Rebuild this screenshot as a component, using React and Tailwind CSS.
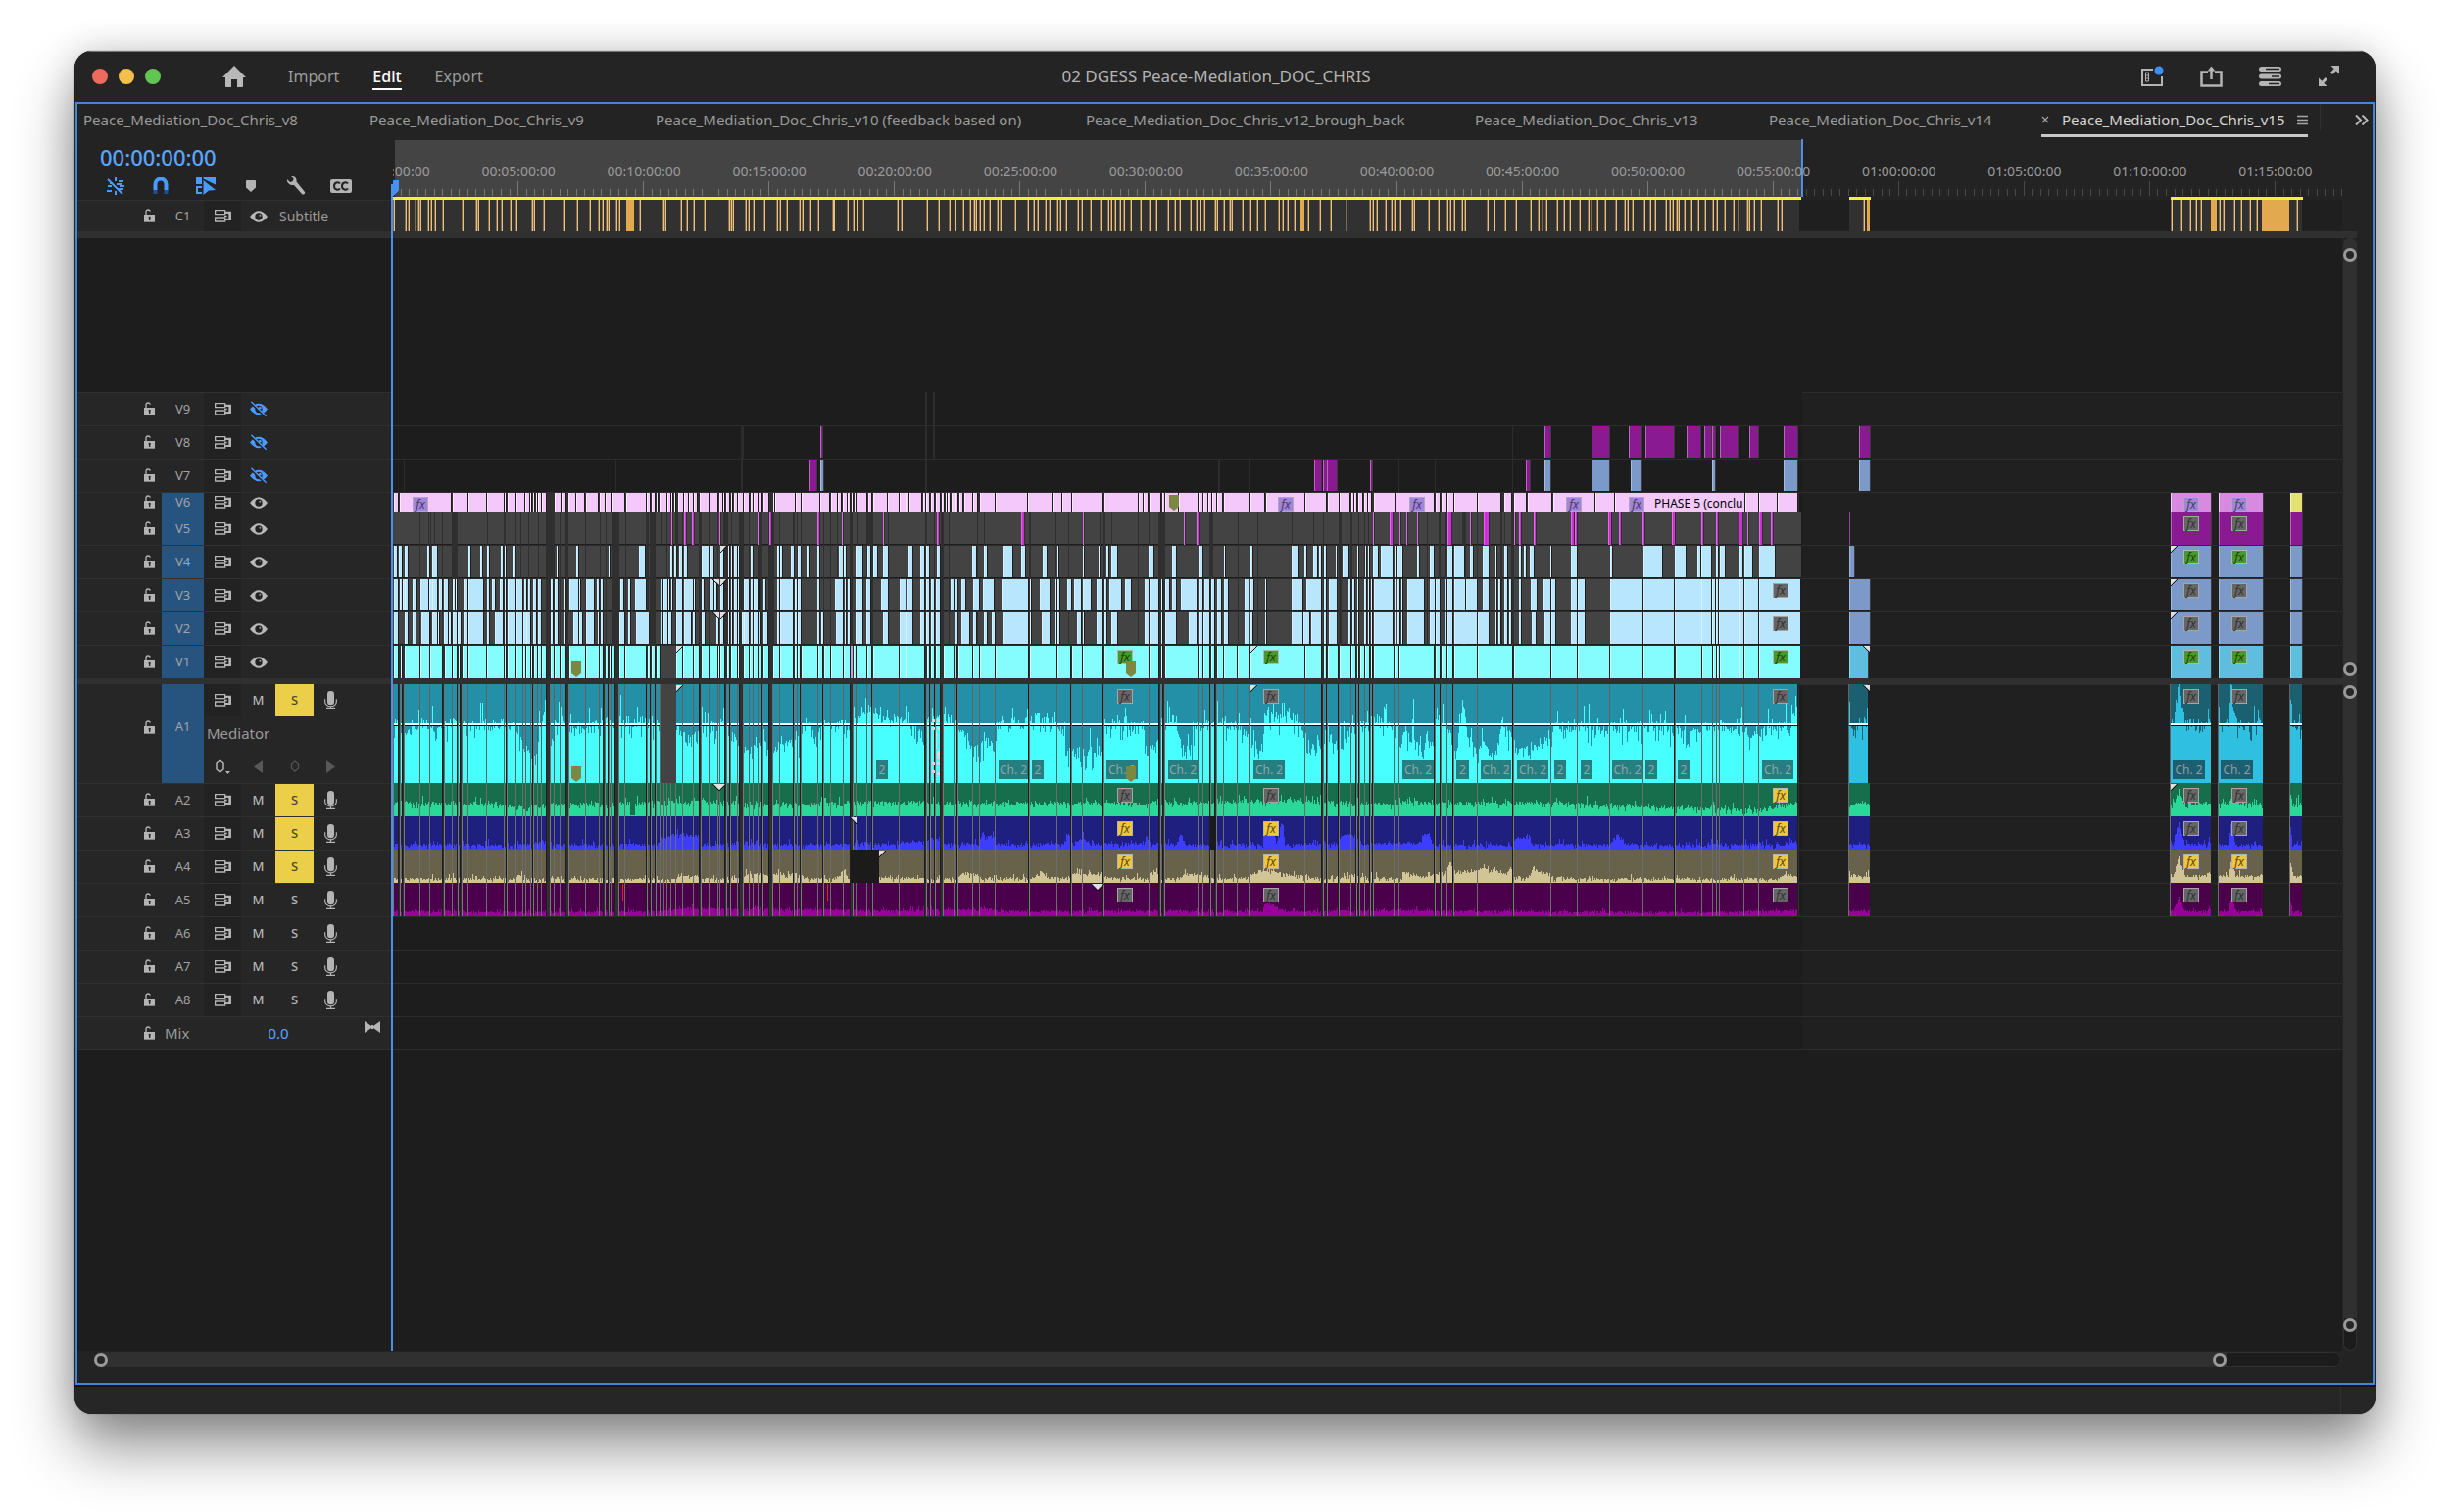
import React from "react";

/* ---------- timeline geometry ---------- */

const LANE_W = 1989;
const pct = (x) => `${((x - 1) / LANE_W) * 100}%`;

/* Clip edges are kept per reel, in thirds of a timeline step, counted from the reel's start. */
const REEL_START = [-30, 1530, 3090];

const parse = (reels) =>
  reels.flatMap((text, i) =>
    text
      .trim()
      .split(/\s+/)
      .filter(Boolean)
      .map((pair) => {
        const [a, b] = pair.split("-").map(Number);
        const x0 = Math.round((a + REEL_START[i]) / 3);
        const x1 = Math.max(x0 + 1, Math.round(((b ?? a + 3) + REEL_START[i]) / 3));
        return [x0, x1];
      })
  );

const CUTS = parse([
  "36-49 57-61 69-115 117-144 147-184 192-212 216-227 233-237 245-261 264-319 322-371 374-378 384-408 411-429 433-437 442-452 456-460 464-474 478-486 489-501 516-524 529-543 546-560 574-620 624-664 667-674 683-690 695-700 703-711 726-741 745-808 813-820 825-835 839-850 853-860 863-870 874-882 886-897 900-918 922-952 955-970 978-1000 1003-1026 1029-1033 1036-1048 1056-1063 1068-1086 1089-1093 1108-1121 1126-1133 1137-1148 1152-1160 1167-1182 1198-1215 1218-1256 1263-1268 1271-1279 1283-1331 1335-1348 1352-1370 1373-1411 1414-1431 1444-1450 1453-1482 1486-1496 1504-1582",
  "25-42 46-99 107-115 119-128 135-148 160-189 193-198 204-246 249-268 271-316 319-418 422-503 507-547 551-582 586-646 650-785 789-817 825-828 836-936 940-951 955-972 977-987 996-1013 1017-1055 1060-1094 1097-1262 1266-1315 1323-1330 1335-1366 1370-1404 1408-1419 1424-1429 1433-1446 1450-1462 1466-1471 1475-1536 1540-1550 1553-1660",
  "105-117 124-137 140-156 162-231 235-338 345-456 460-537 541-636 640-738 742-835 839-917 921-950 954-962 966-971 975-1031 1035-1047 1051-1092 1096-1212",
]);

const V6 = parse([
  "36-49 54-211 215-261 264-319 322-371 374-378 384-408 411-435 438-449 453-457 461-466 470-474 478-486 489-501 529-545 548-562 570-592 595-619 624-661 667-680 683-698 705-742 746-808 811-820 824-835 839-843 848-870 873-881 884-889 893-897 907-920 925-935 938-952 955-964 973-1000 1003-1026 1033-1040 1045-1048 1052-1063 1068-1072 1078-1085 1089-1103 1108-1122 1127-1133 1137-1148 1152-1160 1167-1182 1197-1200 1203-1262 1266-1280 1283-1338 1341-1369 1373-1391 1395-1404 1409-1421 1424-1431 1436-1440 1446-1449 1453-1483 1487-1496 1504-1545 1548-1582",
  "25-42 46-50 53-90 95-101 105-115 119-128 135-148 152-160 164-168 172-178 182-192 196-202 206-215 221-246 249-261 269-316 319-414 418-490 495-520 523-548 552-646 650-752 757-768 772-784 788-822 827-833 837-875 880-935 940-950 955-965 970-977 981-993 996-1012 1017-1095 1098-1140 1145-1262 1266-1330 1335-1368 1372-1402 1408-1412 1416-1422 1428-1440 1445-1455 1459-1468 1475-1538 1542-1660",
  "105-117 124-137 140-158 162-231 235-303 315-336 345-381 386-460 465-591 594-652 655-1051 1054-1092 1096-1148 1152-1212",
]);

const V5_GAPS = parse([
  "115-118 140-143 147-150 158-161 184-187 212-231 321-325 373-377 408-411 422-425 448-451 478-481 501-527 543-546 560-570 622-625 667-670 685-688 705-726 745-748 808-815 820-836 869-872 897-905 918-921 970-978 1000-1003 1026-1029 1045-1060 1068-1071 1093-1108 1123-1126 1148-1165 1182-1200 1215-1218 1256-1262 1268-1272 1281-1284 1350-1353 1370-1373 1391-1394 1431-1440 1483-1502 1548-1551",
  "101-107 130-133 150-160 174-177 260-263 283-286 341-344 420-425 500-503 541-544 635-638 648-654 673-676 753-756 785-788 817-836 941-944 973-985 1059-1063 1120-1123 1225-1228 1290-1293 1320-1323 1368-1376 1404-1409 1428-1432 1445-1448 1458-1462",
  "78-81 115-120 135-140 186-198 232-235 303-310 315-318 337-345",
]);

const V5_CLIPS = parse([
  "852-855 885-888 923-929 949-954 1032-1035 1149-1153 1185-1191 1332-1337 1407-1410 1452-1455 1533-1536",
  "138-143 396-405 585-588 893-897 934-938 1472-1475 1524-1533 1554-1557",
  "14-17 48-51 141-153 210-214 251-267 345-348 360-365 405-410 519-528 531-537 634-642 666-671 739-743 829-837 918-923 963-968 1032-1045 1058-1061 1095-1103 1131-1136",
]);

const V4 = parse([
  "36-45 52-60 69-78 138-144 154-168 263-270 301-306 321-326 362-370 374-378 399-408 533-538 594-600 692-697 786-803 883-888 893-900 908-918 924-932 978-1000 1005-1015 1034-1045 1058-1063 1067-1072 1078-1085 1088-1093 1128-1133 1209-1215 1218-1223 1251-1259 1271-1280 1299-1307 1332-1337 1397-1411 1414-1418 1450-1471 1486-1495 1503-1515 1533-1548",
  "50-63 86-99 106-115 137-148 246-258 282-291 339-368 396-408 461-474 506-510 584-587 633-637 656-662 673-690 787-800 857-869 938-951 1016-1020 1098-1103 1224-1245 1263-1269 1289-1302 1307-1314 1322-1330 1358-1363 1379-1398 1424-1428 1448-1452 1458-1462 1473-1488 1496-1534 1540-1544 1549-1560",
  "0-3 47-54 87-99 140-157 163-193 210-218 249-267 288-292 315-324 360-366 376-381 393-405 455-460 519-537 638-646 740-797 837-870 906-915 918-948 963-970 974-989 1034-1044 1050-1074 1095-1143",
]);

const V3 = parse([
  "36-49 53-60 64-68 69-78 93-105 117-141 145-152 154-168 175-183 189-200 216-221 225-229 248-261 263-309 321-326 337-345 360-370 374-378 384-408 411-429 434-440 446-452 463-470 478-486 516-522 529-537 558-562 574-600 604-607 624-648 657-664 668-676 729-738 752-758 774-806 852-857 860-872 876-880 885-888 900-918 924-950 955-957 978-985 1002-1014 1018-1024 1034-1045 1058-1063 1068-1072 1078-1085 1089-1093 1108-1121 1127-1133 1137-1148 1152-1156 1167-1174 1209-1214 1218-1256 1263-1268 1272-1280 1332-1337 1386-1411 1415-1418 1424-1430 1450-1471 1483-1495 1528-1548",
  "25-42 49-63 86-99 106-114 120-128 136-148 179-189 193-200 212-226 249-267 278-312 335-418 422-426 452-482 500-503 506-512 538-548 558-580 585-609 628-646 650-656 666-702 713-732 774-785 789-817 825-828 836-850 857-870 885-934 938-951 956-972 977-987 996-1008 1016-1029 1080-1093 1098-1107 1143-1147 1224-1257 1269-1315 1323-1329 1337-1362 1398-1404 1411-1416 1424-1429 1446-1452 1458-1462 1467-1470 1475-1533 1539-1543 1549-1553",
  "0-3 18-68 87-101 105-117 132-137 140-156 163-195 198-231 249-267 288-292 296-303 315-324 329-336 360-366 396-414 434-455 458-471 519-537 540-561 638-738 740-835 837-917 919-948 952-960 964-970 973-1031 1035-1046 1050-1091 1095-1221",
]);

const V2 = parse([
  "36-49 69-78 93-103 121-144 153-168 172-175 188-200 204-210 216-227 232-240 248-261 263-309 322-326 345-368 374-378 384-408 411-429 432-440 442-453 463-470 478-486 516-522 529-537 558-562 585-600 603-612 624-648 660-664 668-676 726-741 752-758 777-816 852-857 861-872 876-884 900-918 924-945 950-958 978-988 1023-1030 1034-1045 1058-1063 1068-1072 1078-1085 1089-1093 1102-1106 1108-1121 1127-1133 1137-1148 1152-1158 1167-1178 1209-1214 1218-1256 1263-1268 1272-1280 1332-1337 1344-1350 1389-1411 1415-1418 1424-1430 1450-1471 1483-1495 1533-1548",
  "25-42 46-63 86-99 106-114 120-128 136-148 192-201 212-238 249-258 282-291 306-315 339-418 422-427 459-482 500-503 506-512 567-580 584-588 628-646 650-656 673-690 774-785 789-817 825-828 836-870 909-934 938-951 955-972 977-987 996-1008 1016-1029 1080-1093 1098-1105 1143-1147 1224-1258 1260-1278 1284-1315 1323-1329 1337-1362 1398-1404 1411-1416 1424-1429 1446-1452 1458-1462 1467-1470 1475-1533 1539-1543 1549-1553",
  "0-3 18-68 87-101 105-117 132-137 140-156 162-231 235-267 288-292 296-303 315-324 329-336 360-366 398-411 438-455 458-471 519-537 540-561 638-738 740-835 837-917 919-948 952-960 964-970 973-1031 1035-1046 1050-1091 1095-1221",
]);

const V7_PURPLE = parse(["1308-1330", "1293-1314 1320-1331 1333-1362 1464-1469", "381-394"]);
const V7_BLUE = parse(["1341-1349", "", "438-455 581-635 702-736 951-960 1171-1213"]);
const V8_PURPLE = parse(["1341-1348", "", "438-455 581-635 695-736 747-834 873-916 927-948 951-959 975-1030 1065-1091 1171-1213"]);
const V9_LINES = parse(["", "103-107 127-131", ""]);
const V8_LINES = parse(["1097-1107", "103-107 127-131", "338-342"]);
const V7_LINES = parse(["66-69 714-717 1098-1104", "103-107 1000-1004 1094-1098 1552-1555", "101-104 338-342"]);

const SUBTITLES = [
  ...[672, 694, 701, 715, 721, 725, 739, 746, 754, 769, 808, 836, 840, 861, 877, 887, 904, 916, 948, 952, 972, 1013, 1037, 1064, 1080, 1088, 1096, 1101, 1117, 1122, 1164, 1210, 1215, 1245, 1258, 1272, 1293, 1341, 1346, 1350, 1375, 1380, 1391, 1413, 1437, 1443, 1457, 1482, 1489, 1504, 1519, 1550].map((v) => Math.round(v / 1.96 - 340.5)),
  ...[33, 75, 95, 107, 123, 229, 241, 319, 356, 388, 405, 430, 450, 462, 470, 482, 494, 510, 535, 543, 588, 629, 645, 657, 682, 694, 719, 727, 744, 780, 792, 821, 849, 873, 882, 894, 910, 922, 942, 972, 1000, 1020, 1057, 1077, 1093, 1126, 1143, 1155, 1167, 1200, 1208, 1228, 1245, 1252, 1285, 1310, 1329, 1355, 1395, 1407, 1423, 1444, 1485, 1521].map((v) => Math.round(v / 3 + 439.5)),
  ...[24, 73, 146, 153, 167, 192, 212, 220, 237, 273, 281, 326, 354, 383, 391, 404, 428, 436, 505, 525, 558, 591, 636, 660, 672, 684, 717, 738, 758, 786, 815, 824, 840, 864, 897, 925, 933, 950, 986, 1002, 1019, 1051, 1063, 1071, 1083, 1091, 1108, 1129, 1149, 1170, 1194, 1206, 1231, 1259, 1272, 1300, 1307, 1320, 1341, 1393, 1406].map((v) => Math.round(v / 3 + 949.5)),
  1502, 1816, 1826, 1835, 1841, 1846, 1865, 1869, 1880, 1887, 1896, 1903, 1944,
].map((x) => [x, x + 1]);
const SUBTITLE_BLOCKS = [[239, 247], [927, 931], [1505, 1508], [1856, 1862], [1908, 1936]];

const TAIL = [[1487, 1508], [1815, 1856], [1864, 1909], [1937, 1949]];
const TAIL_V1 = [[1487, 1506], ...TAIL.slice(1)];

/* ---------- drawing helpers ---------- */

const rects = (list, y, h) => list.map(([a, b]) => `M${a} ${y}H${b}V${y + h}H${a}Z`).join("");
const rand = (x, seed) => {
  const s = Math.sin(x * 12.9898 + seed * 78.233) * 43758.5453;
  return s - Math.floor(s);
};

/* Loudness curves: one list of [position, height] per reel. */
const curve = (reels) => reels.flatMap((pts, i) => pts.map(([v, h]) => [(v + REEL_START[i]) / 3, h]));
const at = (pts, x) => {
  for (let i = 1; i < pts.length; i++) {
    if (x <= pts[i][0]) {
      const [x0, h0] = pts[i - 1];
      const [x1, h1] = pts[i];
      return h0 + ((h1 - h0) * Math.max(0, x - x0)) / Math.max(0.1, x1 - x0);
    }
  }
  return pts[pts.length - 1][1];
};

const A1_CURVE = curve([
  [[36, 60], [80, 54], [125, 64], [150, 58], [300, 60], [405, 56], [412, 48], [440, 30], [470, 24], [478, 40], [490, 72], [501, 66], [516, 40], [530, 60], [550, 66], [574, 57], [640, 57], [700, 62], [760, 62], [835, 62], [900, 58], [915, 48], [945, 42], [968, 50], [980, 56], [1048, 60], [1060, 50], [1110, 36], [1180, 38], [1200, 36], [1278, 42], [1284, 54], [1310, 58], [1330, 40], [1336, 58], [1370, 60], [1430, 60], [1450, 68], [1490, 78], [1504, 76], [1530, 66], [1558, 62]],
  [[0, 64], [40, 64], [50, 62], [99, 46], [107, 70], [148, 72], [160, 66], [205, 60], [245, 36], [316, 44], [319, 60], [400, 62], [425, 64], [500, 68], [515, 56], [545, 30], [646, 32], [650, 60], [690, 60], [768, 58], [772, 30], [817, 38], [836, 60], [870, 64], [882, 34], [920, 32], [925, 60], [1055, 60], [1094, 50], [1100, 42], [1134, 36], [1138, 72], [1160, 70], [1170, 64], [1215, 70], [1260, 58], [1268, 34], [1340, 46], [1350, 36], [1404, 52], [1450, 60], [1480, 64], [1540, 56]],
  [[0, 52], [30, 44], [35, 70], [40, 42], [98, 40], [106, 66], [130, 62], [140, 56], [156, 42], [170, 34], [188, 84], [205, 42], [233, 36], [240, 44], [270, 30], [292, 34], [308, 66], [335, 44], [345, 38], [370, 30], [400, 38], [456, 44], [460, 58], [560, 58], [600, 54], [640, 56], [740, 58], [835, 54], [880, 48], [920, 58], [1000, 58], [1040, 50], [1092, 54], [1150, 56], [1190, 60], [1210, 76]],
]);
const A2_CURVE = curve([[[36, 13], [300, 13], [430, 9], [530, 12], [1000, 15], [1200, 12], [1560, 15]], [[0, 14], [800, 13], [1200, 16], [1560, 12]], [[0, 15], [100, 13], [400, 14], [640, 11], [850, 8], [1100, 7], [1212, 14]]]);
const A3_CURVE = curve([
  [[36, 5], [470, 5], [474, 9], [500, 9], [510, 5], [840, 5], [855, 12], [900, 16], [968, 14], [975, 5], [1040, 5], [1110, 7], [1180, 5], [1430, 5], [1460, 7]],
  [[0, 5], [100, 9], [150, 12], [160, 6], [265, 5], [272, 14], [312, 14], [318, 5], [525, 6], [540, 16], [550, 6], [586, 12], [600, 5], [770, 6], [782, 14], [790, 6], [870, 5], [885, 16], [896, 5], [1134, 5], [1138, 24], [1165, 28], [1176, 6], [1196, 28], [1202, 5], [1366, 6], [1374, 14], [1420, 16], [1428, 6]],
  [[0, 6], [58, 7], [62, 16], [85, 16], [92, 5], [343, 4], [346, 11], [392, 14], [397, 5], [640, 5], [650, 14], [674, 14], [682, 6], [750, 4], [1170, 5], [1212, 9]],
]);
const A4_CURVE = curve([
  [[36, 4], [408, 4], [412, 8], [440, 6], [445, 4], [895, 4], [905, 8], [968, 7], [974, 4], [1100, 5], [1120, 9], [1280, 9], [1290, 5], [1385, 4], [1415, 13], [1424, 4]],
  [[0, 5], [200, 4], [215, 9], [265, 8], [275, 4], [440, 5], [460, 10], [474, 5], [545, 6], [555, 9], [646, 8], [655, 5], [786, 4], [790, 12], [817, 10], [825, 4], [885, 5], [890, 9], [970, 7], [990, 4], [1094, 5], [1100, 9], [1150, 14], [1200, 9], [1262, 6], [1330, 4], [1400, 7], [1560, 4]],
  [[0, 11], [40, 9], [70, 5], [100, 9], [120, 6], [140, 14], [150, 20], [165, 10], [260, 15], [320, 9], [335, 16], [345, 5], [390, 6], [400, 13], [456, 9], [465, 5], [560, 4], [1150, 4], [1180, 9], [1212, 6]],
]);
const A5_CURVE = curve([[[36, 5], [440, 4], [850, 5], [930, 8], [1560, 6]], [[0, 6], [300, 7], [320, 5], [1134, 5], [1139, 13], [1170, 12], [1180, 9], [1200, 5], [1560, 6]], [[0, 6], [640, 4], [1000, 4], [1212, 6]]]);

/* Clips after the out point have their own loudness peaks. */
const tailLevel = (x, base, peak) => {
  const near = (c, w) => Math.max(0, 1 - Math.abs(x - c) / w);
  return base + (peak - base) * Math.max(near(1823, 6), near(1877, 4), near(1937, 2) * 0.8, near(1854, 2) * 0.3);
};

function wave(clips, height, level, jitter, seed) {
  let d = "";
  for (const [a, b] of clips) {
    for (let x = a; x < b; x++) {
      const r = rand(x, seed);
      const spike = rand(x, seed + 5) > 0.86 ? rand(x, seed + 9) * jitter * 1.8 : 0;
      const dip = rand(x, seed + 7) > 0.84 ? jitter * 0.9 : 0;
      const h = Math.max(1, Math.min(height, Math.round(level(x) + (r - 0.5) * jitter + spike - dip)));
      d += `M${x} ${height - h}h1v${h}h-1z`;
    }
  }
  return d;
}

function Lane({ h, children }) {
  return (
    <svg className="block h-full w-full" viewBox={`1 0 ${LANE_W} ${h}`} preserveAspectRatio="none" shapeRendering="crispEdges" aria-hidden="true">
      {children}
    </svg>
  );
}

function Clips({ list, y, h, fill, edge = "#ffffff", edgeOpacity = 0.6, gap = "#1e1e1e" }) {
  return (
    <>
      <path d={rects(list.map(([, b]) => [b, b + 1]), y, h)} fill={gap} />
      <path d={rects(list, y, h)} fill={fill} />
      <path d={rects(list.map(([a]) => [a, a + 1]), y, h)} fill={edge} fillOpacity={edgeOpacity} />
    </>
  );
}

const Corner = ({ x, flip }) => (
  <g shapeRendering="auto">
    <path d={flip ? `M${x} 1h-6l6 6z` : `M${x} 1h6l-6 6z`} fill="#e0e0e0" />
    <path d={flip ? `M${x - 7} 1l7 7` : `M${x + 7} 1l-7 7`} stroke="#111" strokeWidth="1" />
  </g>
);

const BADGE = {
  gray: "border-[#a6a6a6] bg-[#666666] text-[#333333]",
  green: "border-[#b4b4b4] bg-[#469a2c] text-[#20400f]",
  yellow: "border-[#b4b4b4] bg-[#f0c63c] text-[#5b4a10]",
  violet: "border-[#b3a6c4] bg-[#a284dc] text-[#463a6a]",
};

function Fx({ x, tone }) {
  return (
    <span className={`absolute top-[5px] flex h-[15px] w-4 items-center justify-center border text-[12px] leading-none italic ${BADGE[tone]}`} style={{ left: pct(x) }}>
      fx
    </span>
  );
}

function Channel({ x, w, text, dim }) {
  return (
    <span className={`absolute bottom-1 flex h-[19px] items-center justify-center text-[12px] leading-[19px] whitespace-nowrap ${dim ? "bg-[#1a6070] text-[#8f9ea2]" : "bg-[#257e7f] text-[#8fa6a6]"}`} style={{ left: pct(x), width: w }}>
      {text}
    </span>
  );
}

function Marker({ x }) {
  return (
    <svg className="absolute bottom-px h-4 w-[10px]" style={{ left: pct(x) }} viewBox="0 0 10 16" aria-hidden="true">
      <path d="M0 0h10v12l-5 4-5-4z" fill="#7c8842" />
    </svg>
  );
}

/* ---------- lanes ---------- */

const GREY = [[1, 1438]];
const PALE = { fill: "#b7e6fd", edgeOpacity: 0.45 };

function AudioLane({ h, bg, fg, tailBg, tailFg, points, tail, jitter, seed, edge = 0.35, tailClips = TAIL }) {
  return (
    <>
      <rect x="1" y="0" width="1435" height={h} fill="#303030" />
      <path d={rects(CUTS.map(([, b]) => [b, b + 1]), 0, h)} fill="#1e1e1e" />
      <path d={rects(CUTS, 0, h)} fill={bg} />
      <path d={wave(CUTS, h, (x) => at(points, x), jitter, seed)} fill={fg} />
      <path d={rects(tailClips, 0, h)} fill={tailBg ?? bg} />
      <path d={wave(tailClips, h, (x) => tailLevel(x, tail[0], tail[1]), jitter, seed)} fill={tailFg ?? fg} />
      <path d={rects([...CUTS, ...tailClips].map(([a]) => [a - 1, a]), 0, h)} fill="#ffffff" fillOpacity={edge} />
    </>
  );
}

const LANES = {
  V9: <path d={rects(V9_LINES, 0, 34)} fill="#2c2c2c" />,
  V8: (
    <>
      <path d={rects(V8_LINES, 0, 34)} fill="#2c2c2c" />
      <Clips list={[...V8_PURPLE, [1497, 1508]]} y={1} h={32} fill="#8a1a92" edgeOpacity={0.35} gap="#3a3a3a" />
    </>
  ),
  V7: (
    <>
      <path d={rects(V7_LINES, 0, 34)} fill="#2c2c2c" />
      <Clips list={V7_PURPLE} y={1} h={32} fill="#8a1a92" edgeOpacity={0.35} gap="#3a3a3a" />
      <Clips list={[...V7_BLUE, [1497, 1508]]} y={1} h={32} fill="#7b99c9" edgeOpacity={0.35} gap="#3a3a3a" />
    </>
  ),
  V6: (
    <>
      <path d={rects([[1, 1436]], 0, 20)} fill="#303030" />
      <Clips list={V6} y={1} h={19} fill="#f4c8fa" />
      <Clips list={TAIL.slice(1, 3)} y={1} h={19} fill="#d68ae0" gap="#3a3a3a" />
      <Clips list={TAIL.slice(3)} y={1} h={19} fill="#e2e272" gap="#3a3a3a" />
    </>
  ),
  V5: (
    <>
      <path d={rects(GREY, 1, 32)} fill="#434343" />
      <path d={rects(V5_GAPS, 1, 33)} fill="#2f2f2f" />
      <Clips list={V5_CLIPS} y={1} h={33} fill="#cf30dc" edge="#e070ea" edgeOpacity={0.9} gap="#2f2f2f" />
      <path d={rects([[1487, 1488]], 1, 33)} fill="#94409a" />
      <Clips list={TAIL.slice(1)} y={1} h={33} fill="#8a1a92" edgeOpacity={0.35} gap="#3a3a3a" />
    </>
  ),
  V4: (
    <>
      <path d={rects(GREY, 1, 32)} fill="#434343" />
      <path d={rects(V5_GAPS, 1, 33)} fill="#2f2f2f" />
      <Clips list={V4} y={1} h={32} {...PALE} />
      <Clips list={[[1487, 1492], ...TAIL.slice(1)]} y={1} h={32} fill="#7b99c9" edgeOpacity={0.3} gap="#3a3a3a" />
      <Corner x={335} /><Corner x={1815} />
    </>
  ),
  V3: (
    <>
      <path d={rects(GREY, 1, 32)} fill="#434343" />
      <path d={rects(V5_GAPS, 1, 33)} fill="#2f2f2f" />
      <Clips list={V3} y={1} h={32} {...PALE} />
      <Clips list={TAIL} y={1} h={32} fill="#7b99c9" edgeOpacity={0.3} gap="#3a3a3a" />
      <Corner x={335} /><Corner x={334} flip /><Corner x={1815} />
    </>
  ),
  V2: (
    <>
      <path d={rects(GREY, 1, 32)} fill="#434343" />
      <path d={rects(V5_GAPS, 1, 33)} fill="#2f2f2f" />
      <Clips list={V2} y={1} h={32} {...PALE} />
      <Clips list={TAIL} y={1} h={32} fill="#7b99c9" edgeOpacity={0.3} gap="#3a3a3a" />
      <Corner x={335} /><Corner x={334} flip /><Corner x={1815} />
    </>
  ),
  V1: (
    <>
      <path d={rects(GREY, 1, 33)} fill="#303030" />
      <Clips list={[...CUTS.slice(0, -1), [1395, 1437]]} y={1} h={33} fill="#85fdff" />
      <path d={rects([[274, 290]], 1, 33)} fill="#434343" />
      <path d={rects([[468, 470]], 1, 33)} fill="#c79fd0" />
      <Clips list={TAIL_V1} y={1} h={33} fill="#5fbddd" edgeOpacity={0.35} gap="#3a3a3a" />
      <Corner x={290} /><Corner x={876} /><Corner x={1508} flip />
    </>
  ),
  A1: (
    <>
      <AudioLane h={101} bg="#2490a8" fg="#48ffff" tailBg="#1a6070" tailFg="#2fc0e1" points={A1_CURVE} tail={[60, 98]} jitter={13} seed={3} tailClips={TAIL_V1} edge={0.3} />
      <path d={rects([...CUTS, ...TAIL_V1], 40, 2)} fill="#ffffff" />
      <path d={rects([...CUTS, ...TAIL_V1], 42, 1)} fill="#101010" />
      <path d={rects([[274, 290]], 0, 101)} fill="#434343" />
      <path d="M551 36h3v3h-3zM556 36h3v3h-3zM551 44h3v3h-3zM556 44h3v3h-3zM555 48h1v18h-1zM556 68h3v9h-3zM551 80h3v3h-3zM556 80h3v3h-3zM551 88h3v3h-3zM556 90h3v3h-3z" fill="#d8d8d8" />
      <Corner x={290} /><Corner x={876} /><Corner x={1508} flip />
    </>
  ),
  A2: (
    <>
      <AudioLane h={34} bg="#166e4d" fg="#2ad99a" points={A2_CURVE} tail={[13, 23]} jitter={4} seed={11} />
      <path d={rects([[243, 248]], 20, 13)} fill="#166e4d" />
      <Corner x={334} /><Corner x={334} flip /><Corner x={1815} />
    </>
  ),
  A3: (
    <>
      <AudioLane h={34} bg="#1f1f80" fg="#3d3dff" points={A3_CURVE} tail={[5, 29]} jitter={3} seed={17} />
      <path d={rects([[835, 841]], 0, 34)} fill="#1b1b1b" />
      <Corner x={474} flip />
    </>
  ),
  A4: (
    <>
      <AudioLane h={34} bg="#68624a" fg="#d1c597" points={A4_CURVE} tail={[7, 26]} jitter={3} seed={23} />
      <path d={rects([[468, 497]], 0, 34)} fill="#1b1b1b" />
      <Corner x={497} />
    </>
  ),
  A5: (
    <>
      <AudioLane h={34} bg="#4b004b" fg="#990099" points={A5_CURVE} tail={[5, 20]} jitter={2} seed={29} />
      <path d={rects([[235, 236], [444, 445]], 1, 17)} fill="#e02020" />
      <Corner x={720} /><Corner x={720} flip />
    </>
  ),
};

const OVERLAY = {
  V6: (
    <>
      {[21, 904, 1038, 1198, 1262, 1828, 1877].map((x) => <Fx key={x} x={x} tone="violet" />)}
      <Marker x={793} />
      <span className="absolute top-px text-[12px] leading-[22px] whitespace-nowrap text-black" style={{ left: pct(1288) }}>
        PHASE 5 (conclu
      </span>
    </>
  ),
  V5: [1828, 1877].map((x) => <Fx key={x} x={x} tone="gray" />),
  V4: [1828, 1877].map((x) => <Fx key={x} x={x} tone="green" />),
  V3: [1409, 1828, 1877].map((x) => <Fx key={x} x={x} tone="gray" />),
  V2: [1409, 1828, 1877].map((x) => <Fx key={x} x={x} tone="gray" />),
  V1: (
    <>
      {[740, 889, 1409, 1828, 1877].map((x) => <Fx key={x} x={x} tone="green" />)}
      <Marker x={183} /><Marker x={749} />
    </>
  ),
  A1: (
    <>
      {[740, 889, 1409, 1828, 1877].map((x) => <Fx key={x} x={x} tone="gray" />)}
      {[[494, 12, "2"], [619, 30, "Ch. 2"], [653, 12, "2"], [729, 32, "Ch. 2"], [792, 30, "Ch. 2"], [879, 32, "Ch. 2"], [1031, 32, "Ch. 2"], [1086, 13, "2"], [1111, 31, "Ch. 2"], [1148, 32, "Ch. 2"], [1186, 12, "2"], [1213, 12, "2"], [1245, 31, "Ch. 2"], [1279, 12, "2"], [1312, 12, "2"], [1398, 32, "Ch. 2"]].map(([x, w, t]) => (
        <Channel key={x} x={x} w={w} text={t} />
      ))}
      <Channel x={1817} w={33} text="Ch. 2" dim />
      <Channel x={1866} w={33} text="Ch. 2" dim />
      <Marker x={183} /><Marker x={749} />
    </>
  ),
  A2: (<><Fx x={740} tone="gray" /><Fx x={889} tone="gray" /><Fx x={1409} tone="yellow" /><Fx x={1828} tone="gray" /><Fx x={1877} tone="gray" /></>),
  A3: (<><Fx x={740} tone="yellow" /><Fx x={889} tone="yellow" /><Fx x={1409} tone="yellow" /><Fx x={1828} tone="gray" /><Fx x={1877} tone="gray" /></>),
  A4: [740, 889, 1409, 1828, 1877].map((x) => <Fx key={x} x={x} tone="yellow" />),
  A5: [740, 889, 1409, 1828, 1877].map((x) => <Fx key={x} x={x} tone="gray" />),
};

function LaneRow({ name, className, h }) {
  return (
    <div className={`relative shrink-0 ${className}`}>
      <Lane h={h}>
        <rect x="1439" y="0" width="551" height={h} fill="#202020" />
        <rect x={name === "V9" ? 1439 : 1} y="0" width={LANE_W} height="1" fill="#2d2d2d" />
        {LANES[name]}
      </Lane>
      {OVERLAY[name]}
    </div>
  );
}

/* ---------- icons ---------- */

const LockIcon = () => (
  <svg className="h-[14px] w-[11px]" viewBox="0 0 33 42" aria-hidden="true">
    <path d="M6 20V10a6 6 0 0 1 6-7c4 0 6 1 7 5" fill="none" stroke="#b4b4b4" strokeWidth="4" />
    <rect y="18" width="33" height="23" fill="#b4b4b4" />
    <path d="M17 23a4 4 0 0 1 2 7v6h-4v-6a4 4 0 0 1 2-7z" fill="#222" />
  </svg>
);
const SyncIcon = () => (
  <svg className="h-[13px] w-[17px]" viewBox="0 0 51 39" aria-hidden="true">
    <path d="M31 5h20v28H31v-6h12V12H31z" fill="#b4b4b4" />
    <path d="M2 2h30v12H2zM2 24h30v12H2z" fill="#1c1c1c" stroke="#b4b4b4" strokeWidth="4" />
    <path d="M30 17h8v5h-8z" fill="#b4b4b4" />
  </svg>
);
const EyeIcon = () => (
  <svg className="h-3 w-[18px]" viewBox="0 0 54 36" aria-hidden="true">
    <path d="M0 18Q27-17 54 18 27 53 0 18z" fill="#b8b8b8" />
    <circle cx="27" cy="18" r="11" fill="#222" />
    <circle cx="31" cy="14" r="3" fill="#999" />
  </svg>
);
const EyeOffIcon = () => (
  <svg className="h-[17px] w-[18px]" viewBox="0 0 54 50" aria-hidden="true">
    <path d="M0 25Q27-10 54 25 27 60 0 25z" fill="#4b9bff" />
    <circle cx="27" cy="25" r="11" fill="#222" />
    <circle cx="31" cy="21" r="4" fill="#4b9bff" />
    <path d="M3 5l46 44" stroke="#262626" strokeWidth="8" />
    <path d="M4 2l46 45" stroke="#4b9bff" strokeWidth="4" />
  </svg>
);
const MicIcon = () => (
  <svg className="h-[19px] w-[13px]" viewBox="0 0 39 57" aria-hidden="true">
    <rect x="9" y="0" width="21" height="43" rx="10" fill="#b4b4b4" />
    <path d="M2 25v8a17 14 0 0 0 35 0v-8M19.500 46v8M6 55h27" fill="none" stroke="#b4b4b4" strokeWidth="3.500" />
  </svg>
);
const RippleIcon = () => (
  <svg className="h-5 w-5" viewBox="0 0 20 20" fill="none" stroke="#4b9bff" strokeWidth="2" aria-hidden="true">
    <path d="M10 1v4M10 15v4M2 10h4M14 10h5M13 5h5M1 15h5M11 8h5M4 7h3M13 13h5" />
    <path d="M2 3l15 15" />
  </svg>
);
const MagnetIcon = () => (
  <svg className="h-[18px] w-4" viewBox="0 0 16 18" fill="none" strokeWidth="4" aria-hidden="true">
    <path d="M2.500 13V7a5.500 5.500 0 0 1 11 0v6" stroke="#4b9bff" />
    <path d="M2.500 13v4M13.500 13v4" stroke="#235089" />
  </svg>
);
const LinkIcon = () => (
  <svg className="h-[18px] w-5" viewBox="0 0 20 18" aria-hidden="true">
    <path d="M0 0h6v7H0zM7.500 0H20v7.500L7.500 1.500zM0 9h6v2H2v4h4v2H0zM7.500 3L20 13l-7 .5-5.500 4.500z" fill="#4b9bff" />
  </svg>
);
const MarkerIcon = () => (
  <svg className="h-3 w-[10px]" viewBox="0 0 10 12" aria-hidden="true">
    <path d="M1 0h8a1 1 0 0 1 1 1v6.500L5 12 0 7.500V1a1 1 0 0 1 1-1z" fill="#b4b4b4" />
  </svg>
);
const WrenchIcon = () => (
  <svg className="h-[19px] w-5" viewBox="0 0 20 19" aria-hidden="true">
    <path d="M1 3l3 3 3-1 .5-3L5 0c4-.5 6 2 5.500 5.500L19 16c.8 1.500-1.500 3.500-3 2L8 9C4 9.500.5 7 1 3z" fill="#b4b4b4" />
  </svg>
);
const CcIcon = () => (
  <svg className="h-[14px] w-[22px]" viewBox="0 0 22 14" aria-hidden="true">
    <rect width="22" height="14" rx="2" fill="#b4b4b4" />
    <path d="M10 4.500C8.500 2.500 4 3 4 7s4.500 4.500 6 2.500M18 4.500c-1.500-2-6-1.500-6 2.500s4.500 4.500 6 2.500" fill="none" stroke="#232323" strokeWidth="2" />
  </svg>
);

function Knob({ className = "" }) {
  return <button aria-label="Zoom handle" className={`block size-[14px] shrink-0 rounded-full border-[3px] border-[#9a9a9a] bg-[#262626] ${className}`} />;
}

/* ---------- track headers ---------- */

const VIDEO = [
  ["V9", "h-[34px]", 34, false, true],
  ["V8", "h-[34px]", 34, false, true],
  ["V7", "h-[34px]", 34, false, true],
  ["V6", "h-5", 20, true, false],
  ["V5", "h-[34px]", 34, true, false],
  ["V4", "h-[34px]", 34, true, false],
  ["V3", "h-[34px]", 34, true, false],
  ["V2", "h-[34px]", 34, true, false],
  ["V1", "h-[34px]", 34, true, false],
];
const AUDIO = [["A2", true], ["A3", true], ["A4", true], ["A5", false], ["A6", false], ["A7", false], ["A8", false]];

const cell = "flex h-full shrink-0 items-center justify-center";
const HEAD_COLS = "grid-cols-[60px_26px_43px_38px_35px_39px_34px_1fr]";

function Lock({ name }) {
  return (
    <button aria-label={`Lock ${name}`} className={`${cell} col-start-2 pb-px`}>
      <LockIcon />
    </button>
  );
}

function VideoHeader({ name, height, target, hidden, children }) {
  return (
    <div className={`grid shrink-0 items-center border-t border-[#303030] bg-[#262626] ${HEAD_COLS} ${height}`}>
      <Lock name={name} />
      <button className={`${cell} text-[13px] text-[#a3a3a3] ${target ? "bg-[#27547f]" : ""}`}>{name}</button>
      <button aria-label={`Sync lock ${name}`} className={`${cell} bg-[#222222]`}>
        <SyncIcon />
      </button>
      <button aria-label={`Toggle output ${name}`} className={cell}>
        {hidden ? <EyeOffIcon /> : <EyeIcon />}
      </button>
      {children}
    </div>
  );
}

function AudioButtons({ name, solo }) {
  return (
    <>
      <button aria-label={`Sync lock ${name}`} className={`${cell} col-start-4 row-start-1 bg-[#222222]`}>
        <SyncIcon />
      </button>
      <button aria-label={`Mute ${name}`} className={`${cell} col-start-5 row-start-1 text-[13px] font-medium text-[#b4b4b4]`}>M</button>
      <button aria-label={`Solo ${name}`} className={`${cell} col-start-6 row-start-1 text-[13px] font-medium ${solo ? "bg-[#ebcf48] text-[#4d4724]" : "text-[#b4b4b4]"}`}>S</button>
      <button aria-label={`Record ${name}`} className={`${cell} col-start-7 row-start-1`}>
        <MicIcon />
      </button>
    </>
  );
}

/* ---------- ruler ---------- */

const MINUTE = 25.613;
const LABELS = Array.from({ length: 16 }, (_, i) => {
  const m = i * 5;
  return { x: m * MINUTE, text: `${String(Math.floor(m / 60)).padStart(2, "0")}:${String(m % 60).padStart(2, "0")}:00:00` };
});
const TICKS = Array.from({ length: 234 }, (_, i) => ({ x: Math.round((i * MINUTE) / 3), major: i % 15 === 0 }));

function Ruler() {
  return (
    <div className="relative h-[62px] shrink-0 overflow-hidden">
      <Lane h={62}>
        <rect x="3" y="1" width="1435" height="58" fill="#444444" />
        {[true, false].map((inside) => (
          <path
            key={String(inside)}
            fill={inside ? "#777777" : "#484848"}
            d={TICKS.filter((t) => t.x < 1438 === inside).map((t) => `M${t.x} ${t.major ? 43 : 51}h1V58h-1z`).join("")}
          />
        ))}
        <path d={rects([[1, 1438], [1487, 1509], [1815, 1950]], 59, 3)} fill="#f5f03c" />
        <rect x="1438" y="0" width="2" height="59" fill="#4a90e8" />
        <path d="M1 42h6v10l-6 6z" fill="#4a90f0" />
      </Lane>
      {LABELS.map((l) => (
        <span key={l.text} className="absolute top-6 w-24 -translate-x-1/2 text-center text-[14px] leading-[18px] text-[#9a9a9a]" style={{ left: pct(l.x + 1) }}>
          {l.text}
        </span>
      ))}
    </div>
  );
}

/* ---------- application ---------- */

const TABS = [
  ["Peace_Mediation_Doc_Chris_v8", "w-[292px]"],
  ["Peace_Mediation_Doc_Chris_v9", "w-[292px]"],
  ["Peace_Mediation_Doc_Chris_v10 (feedback based on)", "w-[439px]"],
  ["Peace_Mediation_Doc_Chris_v12_brough_back", "w-[397px]"],
  ["Peace_Mediation_Doc_Chris_v13", "w-[300px]"],
  ["Peace_Mediation_Doc_Chris_v14", "w-[278px]"],
];

function TitleBar() {
  return (
    <header className="grid h-[52px] shrink-0 grid-cols-[1fr_auto_1fr] items-center border-t border-[#777777] bg-[#242424] pr-9 pb-[2px] pl-[18px] text-[16px]">
      <div className="flex items-center">
        <div className="flex gap-[11px]">
          <button aria-label="Close" className="size-4 rounded-full bg-[#ed6a5e]" />
          <button aria-label="Minimize" className="size-4 rounded-full bg-[#f5bf4f]" />
          <button aria-label="Full screen" className="size-4 rounded-full bg-[#61c554]" />
        </div>
        <nav className="ml-[63px] flex items-center">
          <button aria-label="Home">
            <svg className="h-[22px] w-6" viewBox="0 0 24 22" aria-hidden="true">
              <path d="M12 0l12 12h-3v9a1 1 0 0 1-1 1h-5v-8H9v8H4a1 1 0 0 1-1-1v-9H0z" fill="#b8b8b8" />
            </svg>
          </button>
          <a href="#import" className="ml-[43px] text-[#9c9c9c]">Import</a>
          <a href="#edit" className="ml-[34px] border-b-2 border-white pt-[2px] font-medium text-white">Edit</a>
          <a href="#export" className="ml-[34px] text-[#9c9c9c]">Export</a>
        </nav>
      </div>
      <h1 className="text-[17px] whitespace-nowrap text-[#b4b4b4]">02 DGESS Peace-Mediation_DOC_CHRIS</h1>
      <div className="flex items-center justify-end gap-[37px]">
        <button aria-label="Workspaces">
          <svg className="h-[22px] w-[23px]" viewBox="0 0 23 22" fill="none" aria-hidden="true">
            <path d="M12 4H1v16h20v-9" stroke="#b4b4b4" strokeWidth="2" />
            <path d="M4.500 7v9h3V7zM4.500 10h3M4.500 13h3" stroke="#b4b4b4" />
            <circle cx="18" cy="5" r="4.500" fill="#3f8ef5" />
          </svg>
        </button>
        <button aria-label="Quick export">
          <svg className="h-[22px] w-[23px]" viewBox="0 0 23 22" fill="none" stroke="#b4b4b4" strokeWidth="2.500" aria-hidden="true">
            <path d="M8 6.500H1.500v14h20v-14H15M11.500 14V3" />
            <path d="M7.500 5.500l4-5 4 5z" fill="#b4b4b4" stroke="none" />
          </svg>
        </button>
        <button aria-label="Progress">
          <svg className="h-5 w-[23px]" viewBox="0 0 23 20" aria-hidden="true">
            <rect width="23" height="5" rx="2.500" fill="#b4b4b4" /><rect y="7.500" width="23" height="5" rx="2.500" fill="#b4b4b4" /><rect y="15" width="23" height="5" rx="2.500" fill="#b4b4b4" />
            <path d="M7 2.500h14M13 10h8M10 17.500h11" stroke="#242424" strokeWidth="1.500" />
          </svg>
        </button>
        <button aria-label="Maximize">
          <svg className="h-[23px] w-[23px]" viewBox="0 0 23 23" aria-hidden="true">
            <path d="M14 9l6-6M9 14l-6 6" stroke="#b4b4b4" strokeWidth="3" />
            <path d="M13.500 1H22v8.500zM1 13.500V22h8.500z" fill="#b4b4b4" />
          </svg>
        </button>
      </div>
    </header>
  );
}

export default function App() {
  return (
    <div className="flex min-h-screen flex-col bg-white px-[76px] pt-[52px] pb-[100px] font-['Noto_Sans','Open_Sans',sans-serif]">
      <div className="flex grow flex-col overflow-hidden rounded-[18px] bg-[#262626] shadow-[0_34px_60px_rgba(0,0,0,0.44),0_0_36px_rgba(0,0,0,0.16),0_0_1px_rgba(0,0,0,0.8)]">
        <TitleBar />
        <main className="mx-px flex grow flex-col border-2 border-[#4684d6] bg-[#232323]">
          <div className="flex h-9 shrink-0 text-[15px] leading-8 text-[#9a9a9a]" role="tablist">
            {TABS.map(([name, width], i) => (
              <button key={name} role="tab" className={`h-8 shrink-0 text-left whitespace-nowrap ${width} ${i === 0 ? "ml-[6px]" : ""}`}>
                {name}
              </button>
            ))}
            <div className="flex h-[34px] shrink-0 items-center border-b-[3px] border-[#c8c8c8] pt-px text-[#d4d4d4]">
              <button aria-label="Close sequence" className="w-[21px] text-left">
                <svg className="size-2" viewBox="0 0 8 8" aria-hidden="true"><path d="M1 1l6 6M7 1L1 7" stroke="#a0a0a0" strokeWidth="1.200" /></svg>
              </button>
              <button role="tab" aria-selected="true" className="w-[240px] text-left whitespace-nowrap">Peace_Mediation_Doc_Chris_v15</button>
              <button aria-label="Panel menu">
                <svg className="h-[11px] w-[11px]" viewBox="0 0 11 11" aria-hidden="true"><path d="M0 1.500h11M0 5.500h11M0 9.500h11" stroke="#a8a8a8" strokeWidth="1.500" /></svg>
              </button>
            </div>
            <div className="ml-3 h-7 w-px bg-[#303030]" />
            <button aria-label="More tabs" className="mr-1 ml-auto flex h-8 items-center">
              <svg className="h-[11px] w-[14px]" viewBox="0 0 14 11" fill="none" stroke="#b8b8b8" strokeWidth="2" aria-hidden="true"><path d="M1 .5l5 5-5 5M7.500.5l5 5-5 5" /></svg>
            </button>
          </div>

          <div className="flex grow">
            <section className="flex w-80 shrink-0 flex-col" aria-label="Track headers">
              <div className="h-[62px] shrink-0 pl-[23px]">
                <div className="pt-[3px] text-[22px] leading-[30px] font-medium text-[#58a6ff]">00:00:00:00</div>
                <div className="-ml-[7px] grid h-[29px] grid-cols-[46px_46px_46px_46px_46px_46px] items-center justify-items-center">
                  <button aria-label="Insert as nest"><RippleIcon /></button>
                  <button aria-label="Snap"><MagnetIcon /></button>
                  <button aria-label="Linked selection"><LinkIcon /></button>
                  <button aria-label="Add marker"><MarkerIcon /></button>
                  <button aria-label="Settings"><WrenchIcon /></button>
                  <button aria-label="Captions"><CcIcon /></button>
                </div>
              </div>
              <VideoHeader name="C1" height="h-8">
                <span className="col-span-3 pl-1 text-[14px] text-[#9a9a9a]">Subtitle</span>
              </VideoHeader>
              <div className="h-[7px] shrink-0 bg-[#303030]" />
              <div className="h-[157px] shrink-0 bg-[#1d1d1d]" />
              {VIDEO.map(([name, height, , target, hidden]) => (
                <VideoHeader key={name} name={name} height={height} target={target} hidden={hidden} />
              ))}
              <div className="h-[6px] shrink-0 bg-[#303030]" />
              <div className={`grid h-[101px] shrink-0 grid-rows-[33px_34px_34px] bg-[#262626] ${HEAD_COLS}`}>
                <button aria-label="Lock A1" className="col-start-2 row-span-3 row-start-1 flex items-center justify-center pb-[14px]"><LockIcon /></button>
                <button className="col-start-3 row-span-3 row-start-1 flex items-center justify-center bg-[#27547f] pb-[14px] text-[13px] text-[#a3a3a3]">A1</button>
                <AudioButtons name="A1" solo />
                <span className="col-span-4 col-start-4 row-start-2 self-center pl-[3px] text-[15px] text-[#9a9a9a]">Mediator</span>
                <button aria-label="Show keyframes" className="col-start-4 row-start-3 flex items-center justify-center">
                  <svg className="h-[15px] w-4" viewBox="0 0 16 15" aria-hidden="true"><path d="M5.500 1l3.500 3v6l-3.500 3L2 10V4z" fill="none" stroke="#b4b4b4" strokeWidth="1.500" /><path d="M11 12h5l-2.500 3z" fill="#b4b4b4" /></svg>
                </button>
                <button aria-label="Previous keyframe" className="col-start-5 row-start-3 flex items-center justify-center"><svg className="h-[13px] w-[9px]" viewBox="0 0 9 13" aria-hidden="true"><path d="M9 0v13L0 6.500z" fill="#585858" /></svg></button>
                <button aria-label="Add keyframe" className="col-start-6 row-start-3 flex items-center justify-center"><svg className="h-3 w-[10px]" viewBox="0 0 10 12" aria-hidden="true"><path d="M5 1l3.500 3v4L5 11 1.500 8V4z" fill="none" stroke="#505050" strokeWidth="1.500" /></svg></button>
                <button aria-label="Next keyframe" className="col-start-7 row-start-3 flex items-center justify-center"><svg className="h-[13px] w-[9px]" viewBox="0 0 9 13" aria-hidden="true"><path d="M0 0v13l9-6.500z" fill="#585858" /></svg></button>
              </div>
              {AUDIO.map(([name, solo]) => (
                <div key={name} className={`grid h-[34px] shrink-0 grid-rows-1 items-center border-t border-[#303030] bg-[#262626] ${HEAD_COLS}`}>
                  <Lock name={name} />
                  <span className={`${cell} text-[13px] text-[#a3a3a3]`}>{name}</span>
                  <AudioButtons name={name} solo={solo} />
                </div>
              ))}
              <div className={`grid h-[35px] shrink-0 items-center border-y border-[#303030] bg-[#262626] ${HEAD_COLS}`}>
                <Lock name="Mix" />
                <span className="col-span-2 pl-[3px] text-[15px] text-[#9a9a9a]">Mix</span>
                <button className="col-span-2 pl-[2px] text-center text-[15px] text-[#58a6ff]">0.0</button>
                <button aria-label="Fit" className="col-start-8 mr-[11px] self-start justify-self-end pt-1">
                  <svg className="h-3 w-4" viewBox="0 0 16 12" aria-hidden="true"><path d="M0 0l7 5v2l-7 5zM16 0L9 5v2l7 5zM7 4h2v4H7z" fill="#b4b4b4" /></svg>
                </button>
              </div>
              <div className="grow bg-[#1d1d1d]" />
            </section>

            <section className="flex min-w-0 grow flex-col" aria-label="Timeline">
              <div className="flex shrink-0">
                <div className="mt-[46px] w-[2px] shrink-0 bg-[#4a90e8]" />
                <div className="min-w-0 grow"><Ruler /></div>
              </div>
              <div className="flex grow flex-col border-l-2 border-[#4a90e8] bg-[#1d1d1d]">
                <div className="h-8 shrink-0 bg-[#1f1f1f]">
                  <Lane h={32}>
                    <path d={rects([[1, 1436], [1487, 1508], [1815, 1949]], 0, 32)} fill="#313131" />
                    <path d={rects(SUBTITLES.map(([a]) => [a - 1, a]), 0, 32)} fill="#806a4c" />
                    <path d={rects(SUBTITLES, 0, 32)} fill="#ecc07c" />
                    <path d={rects(SUBTITLE_BLOCKS, 0, 32)} fill="#e2a94f" />
                  </Lane>
                </div>
                <div className="h-[7px] shrink-0 bg-[#303030]" />
                <div className="h-[157px] shrink-0" />
                {VIDEO.map(([name, height, h]) => (
                  <LaneRow key={name} name={name} className={height} h={h} />
                ))}
                <div className="h-[6px] shrink-0 bg-[#303030]" />
                <LaneRow name="A1" className="h-[101px]" h={101} />
                {[...AUDIO.map(([n]) => n), "Mix"].map((name) => (
                  <LaneRow key={name} name={name} className="h-[34px]" h={34} />
                ))}
                <div className="grow border-t border-[#2d2d2d]" />
              </div>
            </section>

            <aside className="flex w-[31px] shrink-0 flex-col" aria-label="Vertical zoom">
              <div className="h-[94px] shrink-0" />
              <div className="mr-4 h-[7px] shrink-0 bg-[#303030]" />
              <div className="ml-px flex h-[449px] w-[14px] shrink-0 flex-col justify-between rounded-t-full bg-[#303030] pt-[10px] pb-[2px]">
                <Knob /><Knob />
              </div>
              <div className="mr-4 h-[6px] shrink-0 bg-[#303030]" />
              <div className="ml-px flex w-[14px] grow flex-col justify-between rounded-b-full bg-[#303030] pt-px">
                <Knob />
                <div className="rounded-b-full border border-t-0 border-[#303030] bg-[#1c1c1c] pb-[19px]">
                  <Knob className="-ml-px" />
                </div>
              </div>
            </aside>
          </div>

          <div className="flex h-8 shrink-0 items-start pr-8 pl-[17px]">
            <div className="mt-px flex h-[15px] grow items-center rounded-full border border-[#303030] bg-[#1c1c1c]">
              <div className="-ml-px flex h-[15px] w-[95%] grow-0 items-center justify-between rounded-l-full bg-[#303030]">
                <Knob /><Knob />
              </div>
            </div>
          </div>
        </main>
        <footer className="flex h-[30px] shrink-0 justify-end border-t-2 border-[#151515] bg-[#262626]">
          <div className="mr-[35px] w-px bg-[#303030]" />
        </footer>
      </div>
    </div>
  );
}
